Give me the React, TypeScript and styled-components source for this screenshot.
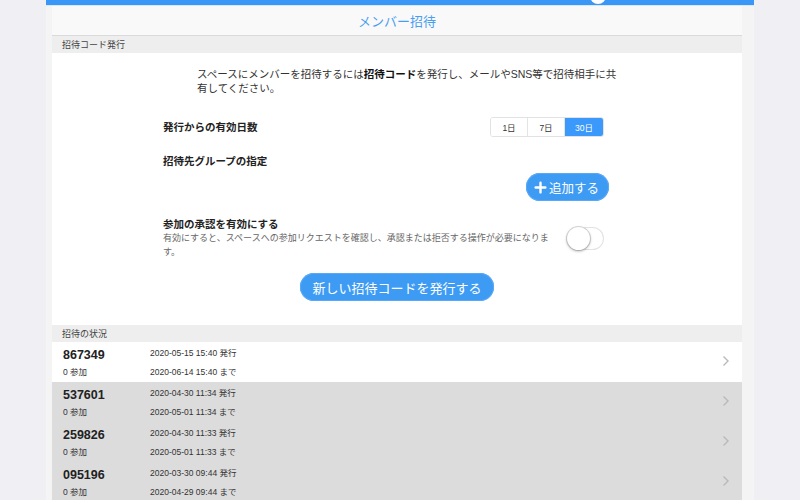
import React, { useState } from 'react';
import styled, { createGlobalStyle } from 'styled-components';

const GlobalStyle = createGlobalStyle`
  html, body {
    margin: 0;
    padding: 0;
    background: #efeff4;
    font-family: "Liberation Sans", "Noto Sans CJK JP", sans-serif;
    overflow: hidden;
  }
`;

const Page = styled.div`
  width: 800px;
  height: 500px;
  display: flex;
  justify-content: flex-start;
`;

const Column = styled.div`
  margin-left: 46px;
  width: 708px;
  height: 500px;
  background: #f4f4f5;
  display: flex;
  flex-direction: column;
`;

const TopBar = styled.div`
  position: relative;
  height: 5px;
  background: #3a97f6;
  border-bottom: 1px solid #d6e8fb;
  flex-shrink: 0;
`;

const Avatar = styled.div`
  position: absolute;
  left: 544px;
  top: -12px;
  width: 16px;
  height: 16px;
  border-radius: 50%;
  background: #fff;
`;

const Panel = styled.div`
  margin: 0 12px 0 6px;
  background: #fff;
  display: flex;
  flex-direction: column;
  flex: 1;
`;

const Header = styled.div`
  height: 29px;
  background: #f9f9f9;
  border-bottom: 1px solid #dadada;
  display: flex;
  align-items: center;
  justify-content: center;
  color: #4a9ef2;
  font-size: 13px;
  font-family: "Noto Sans CJK JP", sans-serif;
`;

const SectionHead = styled.div`
  height: 17px;
  flex-shrink: 0;
  background: #eeeeee;
  display: flex;
  align-items: center;
  padding-left: 10px;
  font-size: 9px;
  color: #444;
  font-family: "Noto Sans CJK JP", sans-serif;
`;

const Form = styled.div`
  padding: 14px 0 24px 111px;
  width: 441px;
  font-family: "Liberation Sans", "Noto Sans CJK JP", sans-serif;
  color: #222;
`;

const Description = styled.p`
  margin: 0 -14px 22px 34px;
  font-size: 10.5px;
  line-height: 14px;
  color: #333;
  white-space: nowrap;
  b {
    font-weight: 700;
    color: #111;
  }
`;

const Row = styled.div<{ $gap?: number }>`
  display: flex;
  align-items: center;
  justify-content: space-between;
  margin-bottom: ${p => p.$gap ?? 0}px;
`;

const Label = styled.div`
  font-size: 10.5px;
  line-height: 13px;
  font-weight: 700;
  color: #222;
`;

const Segments = styled.div`
  display: flex;
  border: 1px solid #e2e2e2;
  border-radius: 3px;
  overflow: hidden;
  height: 18px;
`;

const Segment = styled.button<{ $active?: boolean; $w: number }>`
  width: ${p => p.$w}px;
  border: none;
  border-left: 1px solid #e4e4e4;
  &:first-child { border-left: none; }
  background: ${p => (p.$active ? '#3a99fb' : '#fff')};
  color: ${p => (p.$active ? '#fff' : '#333')};
  font-size: 8.5px;
  font-family: "Liberation Sans", "Noto Sans CJK JP", sans-serif;
  padding: 0;
  cursor: pointer;
`;

const AddButton = styled.button`
  margin-left: auto;
  margin-right: -5px;
  height: 28px;
  padding: 0 10px 0 8px;
  border: none;
  border-radius: 14px;
  background: #3d9bf4;
  color: #fff;
  font-size: 12.5px;
  font-family: "Noto Sans CJK JP", sans-serif;
  display: flex;
  align-items: center;
  gap: 2px;
  box-shadow: 0 0 0 1px #5aa9f6 inset;
`;

const Sub = styled.div`
  max-width: 398px;
  font-size: 9px;
  line-height: 14px;
  color: #666;
`;

const Toggle = styled.div<{ $on: boolean }>`
  width: 37px;
  height: 23px;
  border-radius: 12px;
  background: ${p => (p.$on ? '#4cd964' : '#fff')};
  box-shadow: 0 0 0 1px #e2e2e2 inset;
  position: relative;
  flex-shrink: 0;
  margin-left: 4px;
  cursor: pointer;
  &::after {
    content: '';
    position: absolute;
    top: 0;
    left: ${p => (p.$on ? '14px' : '0')};
    width: 23px;
    height: 23px;
    border-radius: 50%;
    background: #fff;
    box-shadow: 0 1px 3px rgba(0, 0, 0, 0.35), 0 0 0 1px #ddd;
  }
`;

const IssueButton = styled.button`
  display: block;
  margin: 0 0 0 137px;
  width: 194px;
  height: 28px;
  border: none;
  border-radius: 14px;
  background: #3d9bf4;
  color: #fff;
  font-size: 13px;
  font-family: "Noto Sans CJK JP", sans-serif;
  box-shadow: 0 0 0 1px #5aa9f6 inset;
`;

const List = styled.div`
  display: flex;
  flex-direction: column;
`;

const Item = styled.div<{ $muted: boolean }>`
  height: 40px;
  flex-shrink: 0;
  box-sizing: border-box;
  background: ${p => (p.$muted ? '#dcdcdc' : '#fff')};
  display: grid;
  grid-template-columns: 87px 1fr 20px;
  grid-template-rows: 20px 18px;
  align-items: center;
  padding-left: 11px;
  color: #222;
  font-family: "Liberation Sans", "Noto Sans CJK JP", sans-serif;
`;

const Code = styled.div`
  font-size: 12.5px;
  font-weight: 700;
  padding-top: 6px;
`;

const Small = styled.div`
  font-size: 8.5px;
  color: #333;
`;

const Chevron = styled.div`
  grid-row: 1 / 3;
  grid-column: 3;
  display: flex;
  align-items: center;
`;

const invites = [
  { code: '867349', issued: '2020-05-15 15:40', until: '2020-06-14 15:40', muted: false },
  { code: '537601', issued: '2020-04-30 11:34', until: '2020-05-01 11:34', muted: true },
  { code: '259826', issued: '2020-04-30 11:33', until: '2020-05-01 11:33', muted: true },
  { code: '095196', issued: '2020-03-30 09:44', until: '2020-04-29 09:44', muted: true },
];

const days = [
  { label: '1日', w: 36 },
  { label: '7日', w: 37 },
  { label: '30日', w: 39 },
];

const App: React.FC = () => {
  const [day, setDay] = useState('30日');
  const [approve, setApprove] = useState(false);

  return (
    <Page>
      <GlobalStyle />
      <Column>
        <TopBar>
          <Avatar />
        </TopBar>
        <Panel>
          <Header>メンバー招待</Header>
          <SectionHead>招待コード発行</SectionHead>
          <Form>
            <Description>
              <span>スペースにメンバーを招待するには</span>
              <b>招待コード</b>
              <span>を発行し、メールやSNS等で招待相手に共</span>
              <br />
              <span>有してください。</span>
            </Description>
            <Row $gap={18}>
              <Label>発行からの有効日数</Label>
              <Segments>
                {days.map(d => (
                  <Segment key={d.label} $w={d.w} $active={day === d.label} onClick={() => setDay(d.label)}>
                    {d.label}
                  </Segment>
                ))}
              </Segments>
            </Row>
            <Label>招待先グループの指定</Label>
            <Row $gap={17} style={{ marginTop: 5 }}>
              <AddButton>
                <svg width="13" height="13" viewBox="0 0 12 12">
                  <path d="M6 1.5v9M1.5 6h9" stroke="#fff" strokeWidth="2.2" strokeLinecap="round" />
                </svg>
                追加する
              </AddButton>
            </Row>
            <Row $gap={14}>
              <div>
                <Label>参加の承認を有効にする</Label>
                <Sub>有効にすると、スペースへの参加リクエストを確認し、承認または拒否する操作が必要になります。</Sub>
              </div>
              <Toggle $on={approve} onClick={() => setApprove(!approve)} />
            </Row>
            <IssueButton>新しい招待コードを発行する</IssueButton>
          </Form>
          <SectionHead>招待の状況</SectionHead>
          <List>
            {invites.map(inv => (
              <Item key={inv.code} $muted={inv.muted}>
                <Code>{inv.code}</Code>
                <Small>{inv.issued} 発行</Small>
                <Chevron>
                  <svg width="8" height="12" viewBox="0 0 8 12">
                    <path d="M1.5 1.5L6 6l-4.5 4.5" fill="none" stroke="#b8b8bd" strokeWidth="1.4" />
                  </svg>
                </Chevron>
                <Small>0 参加</Small>
                <Small>{inv.until} まで</Small>
              </Item>
            ))}
          </List>
        </Panel>
      </Column>
    </Page>
  );
};

export default App;
